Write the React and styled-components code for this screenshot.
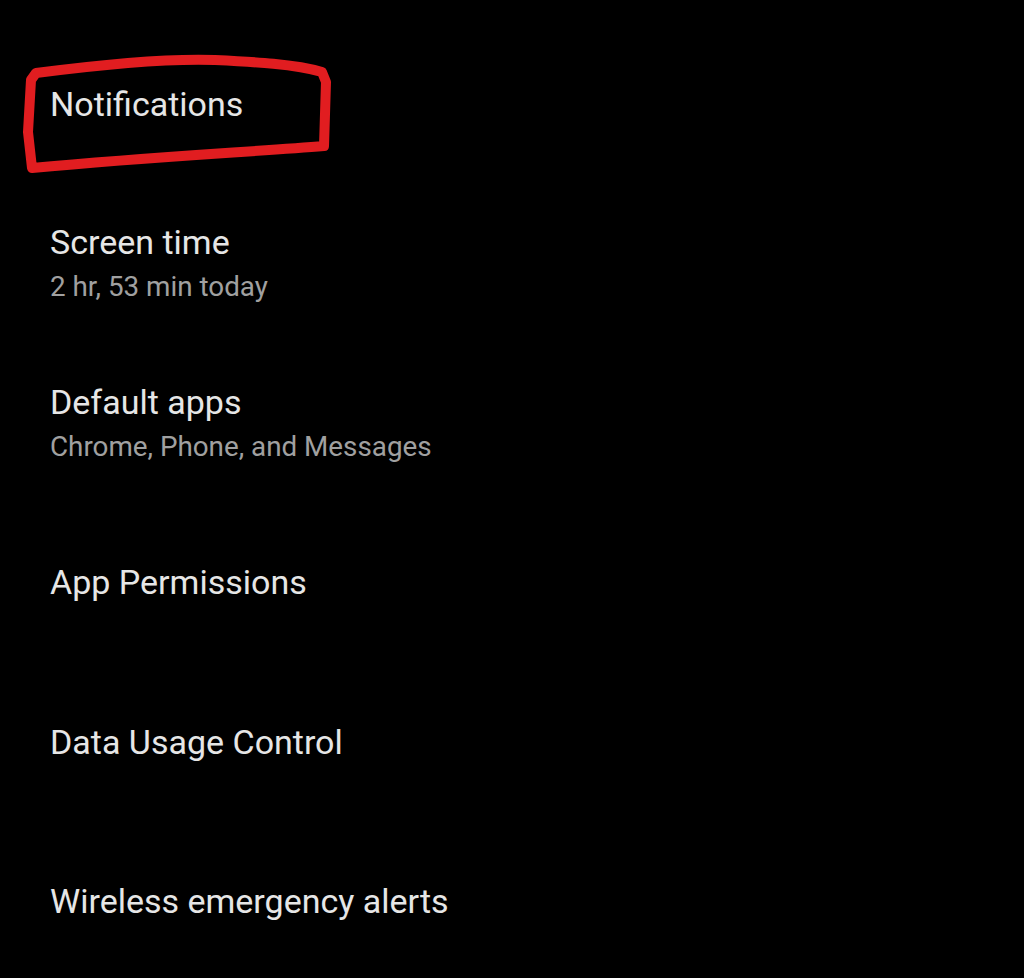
import React from "react";
import styled, { createGlobalStyle } from "styled-components";

const Global = createGlobalStyle`
  html, body { margin: 0; padding: 0; background: #000; }
  body { font-family: Roboto, "Noto Sans", sans-serif; }
`;

const Screen = styled.div`
  position: relative;
  width: 1024px;
  height: 978px;
  background: #000;
  padding-top: 24px;
  box-sizing: border-box;
  overflow: hidden;
`;

const List = styled.ul`
  list-style: none;
  margin: 0;
  padding: 0 0 0 50px;
  display: flex;
  flex-direction: column;
`;

const Row = styled.li`
  height: 159.5px;
  display: flex;
  flex-direction: column;
  justify-content: center;
`;

const Title = styled.div`
  font-size: 34px;
  line-height: 40px;
  color: #e6e6e6;
`;

const Sub = styled.div`
  font-size: 27.8px;
  line-height: 34px;
  margin-top: 8px;
  color: #a0a0a0;
`;

const Scribble = styled.svg`
  position: absolute;
  left: 0;
  top: 0;
  pointer-events: none;
`;

const items = [
  { title: "Notifications" },
  { title: "Screen time", sub: "2 hr, 53 min today" },
  { title: "Default apps", sub: "Chrome, Phone, and Messages" },
  { title: "App Permissions" },
  { title: "Data Usage Control" },
  { title: "Wireless emergency alerts" },
];

export default function App() {
  return (
    <Screen>
      <Global />
      <List>
        {items.map((it) => (
          <Row key={it.title}>
            <Title>{it.title}</Title>
            {it.sub && <Sub>{it.sub}</Sub>}
          </Row>
        ))}
      </List>
      <Scribble width="1024" height="978" viewBox="0 0 1024 978">
        <path
          d="M36 73 C 90 66, 160 58, 215 60 C 255 62, 295 64, 322 72 L 326 82 L 324 146 C 250 152, 150 157, 32 168 L 28 132 L 31 80 Z"
          fill="none"
          stroke="#e11d20"
          strokeWidth="10"
          strokeLinejoin="round"
          strokeLinecap="round"
        />
      </Scribble>
    </Screen>
  );
}
